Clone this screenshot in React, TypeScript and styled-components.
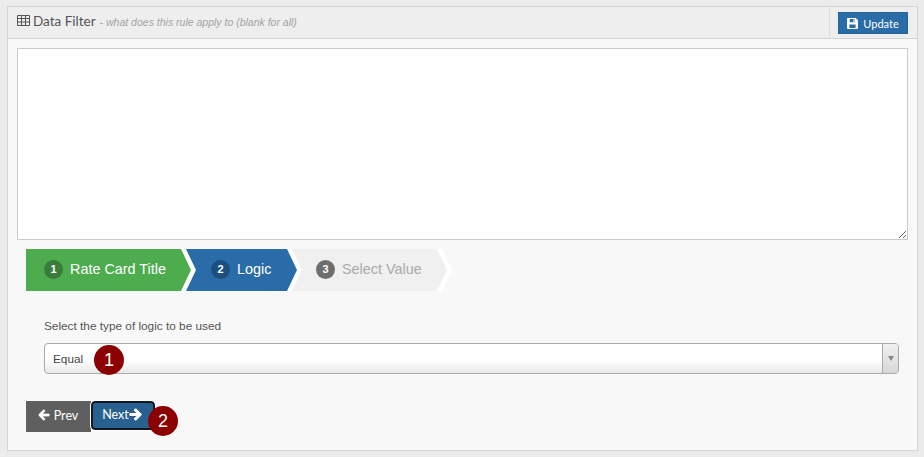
import styled, {createGlobalStyle} from "styled-components";
import {FaArrowLeft, FaArrowRight} from "react-icons/fa";

const GlobalStyle = createGlobalStyle`
  html, body {
    margin: 0;
    background-color: #ebebeb;
  }
  body {
    font-family: "Liberation Sans", Arial, sans-serif;
  }
`

const Page = styled.div`
  width: 924px;
  height: 457px;
  box-sizing: border-box;
  padding: 6px 6px 6px 7px;
  overflow: hidden;
`

const Panel = styled.div`
  height: 445px;
  box-sizing: border-box;
  border: 1px solid #d4d4d4;
  background-color: #f8f8f8;
  display: flex;
  flex-direction: column;
`

const Header = styled.div`
  height: 32px;
  flex: none;
  box-sizing: border-box;
  display: flex;
  align-items: stretch;
  background-color: #eeeeee;
  border-bottom: 1px solid #d4d4d4;
`

const HeaderTitle = styled.div`
  flex: 1;
  display: flex;
  align-items: center;
  padding: 0 0 4px 9px;
  color: #555555;
`

const TitleText = styled.span`
  font-family: Lato, sans-serif;
  font-size: 13.5px;
  margin-left: 3px;
`

const Hint = styled.em`
  font-size: 10.5px;
  color: #a3a3a3;
  margin-left: 4px;
  position: relative;
  top: 1px;
`

const HeaderAction = styled.div`
  width: 88px;
  box-sizing: border-box;
  border-left: 1px solid #dcdcdc;
  padding: 5px 0 0 8px;
`

const UpdateButton = styled.button`
  width: 70px;
  height: 22px;
  padding: 0;
  border: 1px solid #25639b;
  background-color: #2a6ca8;
  color: #ffffff;
  font-family: Lato, sans-serif;
  font-size: 11px;
  display: flex;
  align-items: center;
  justify-content: center;
  gap: 5px;
`

const Body = styled.div`
  flex: 1;
  padding: 9px 9px 0;
  position: relative;
`

const FilterInput = styled.textarea`
  display: block;
  width: 891px;
  height: 192px;
  box-sizing: border-box;
  margin: 0;
  border: 1px solid #cccccc;
  background-color: #ffffff;
  outline: none;
`

const Stepper = styled.div`
  display: flex;
  margin: 9px 0 0 9px;
`

const chevron = "polygon(0 0, calc(100% - 10px) 0, 100% 50%, calc(100% - 10px) 100%, 0 100%, 10px 50%)"
const chevronFlat = "polygon(0 0, calc(100% - 10px) 0, 100% 50%, calc(100% - 10px) 100%, 0 100%)"

const Step = styled.div<{$width: number; $first?: boolean}>`
  width: ${p => p.$width}px;
  height: 42px;
  position: relative;
  margin-left: ${p => (p.$first ? 0 : -5)}px;

  &::before {
    content: "";
    position: absolute;
    inset: 0 -5px 0 5px;
    background-color: #ffffff;
    clip-path: ${chevron};
  }
`

const StepBody = styled.div<{$bg: string; $color: string; $pad: number; $first?: boolean}>`
  position: relative;
  height: 100%;
  box-sizing: border-box;
  display: flex;
  align-items: center;
  gap: 7px;
  padding: 0 0 2px ${p => p.$pad}px;
  background-color: ${p => p.$bg};
  color: ${p => p.$color};
  font-size: 14.4px;
  clip-path: ${p => (p.$first ? chevronFlat : chevron)};
`

const StepNumber = styled.span<{$bg: string}>`
  width: 19px;
  height: 19px;
  border-radius: 50%;
  background-color: ${p => p.$bg};
  color: #ffffff;
  font-size: 11px;
  font-weight: bold;
  display: flex;
  align-items: center;
  justify-content: center;
`

const Field = styled.div`
  margin: 28px 0 0 27px;
  width: 855px;
`

const FieldLabel = styled.div`
  font-size: 11.8px;
  line-height: 14px;
  color: #555555;
  margin-bottom: 10px;
`

const SelectBox = styled.div`
  height: 31px;
  box-sizing: border-box;
  border: 1px solid #aaaaaa;
  border-radius: 4px;
  background: linear-gradient(#ffffff 55%, #e8e8e8);
  display: flex;
  align-items: center;
  justify-content: space-between;
  font-size: 11.8px;
  color: #444444;
  padding-left: 8px;
`

const SelectArrow = styled.div`
  width: 15px;
  height: 100%;
  border-left: 1px solid #aaaaaa;
  display: flex;
  align-items: center;
  justify-content: center;
  background: linear-gradient(#f0f0f0, #d8d8d8);
  border-radius: 0 3px 3px 0;

  &::after {
    content: "";
    border-style: solid;
    border-width: 5px 3px 0;
    border-color: #888888 transparent transparent;
  }
`

const Nav = styled.div`
  display: flex;
  align-items: center;
  margin: 27px 0 0 9px;
`

const PrevButton = styled.button`
  width: 65px;
  height: 31px;
  padding: 0 1px 3px 0;
  border: none;
  background-color: #5f5f5f;
  color: #ffffff;
  font-family: Lato, sans-serif;
  font-size: 12.5px;
  display: flex;
  align-items: center;
  justify-content: center;
  gap: 4px;

  svg {
    stroke: currentColor;
    stroke-width: 40px;
  }
`

const NextButton = styled.button`
  width: 64px;
  height: 29px;
  box-sizing: border-box;
  padding: 0 2px 2px 0;
  border: 2px solid #101820;
  border-radius: 4px;
  outline: 1px solid #ffffff;
  background-color: #286090;
  color: #ffffff;
  font-family: Lato, sans-serif;
  font-size: 12.5px;
  display: flex;
  align-items: center;
  justify-content: center;
  position: relative;
  top: -1px;

  svg {
    stroke: currentColor;
    stroke-width: 40px;
  }
`

const Badge = styled.span<{$left: number; $top: number}>`
  position: absolute;
  left: ${p => p.$left}px;
  top: ${p => p.$top}px;
  width: 30px;
  height: 30px;
  border-radius: 50%;
  background-color: #8b0000;
  color: #ffffff;
  font-size: 18px;
  display: flex;
  align-items: center;
  justify-content: center;
`

const TableIcon = () => (
    <svg width="13" height="11" viewBox="0 0 13 11" fill="none" stroke="#555555" strokeWidth="1">
        <path d="M.5 .5h12v10h-12zM.5 3.5h12M.5 7h12M4.5 .5v10M8.5 .5v10"/>
    </svg>
)

const SaveIcon = () => (
    <svg width="11" height="11" viewBox="0 0 12 12" fill="#ffffff">
        <path fillRule="evenodd" d="M1 0h8.5L12 2.5V11a1 1 0 0 1-1 1H1a1 1 0 0 1-1-1V1a1 1 0 0 1 1-1zm2 1.2v3.3h5.5V1.2zm3.8.5h1.2v2.3H6.8zM2.6 7v3.8h6.8V7z"/>
    </svg>
)

const App = () => {
    return (
        <>
            <GlobalStyle/>
            <Page>
                <Panel>
                    <Header>
                        <HeaderTitle>
                            <TableIcon/>
                            <TitleText>Data Filter</TitleText>
                            <Hint>- what does this rule apply to (blank for all)</Hint>
                        </HeaderTitle>
                        <HeaderAction>
                            <UpdateButton><SaveIcon/>Update</UpdateButton>
                        </HeaderAction>
                    </Header>
                    <Body>
                        <FilterInput/>
                        <Stepper>
                            <Step $width={165} $first>
                                <StepBody $bg="#4cac4e" $color="#ffffff" $pad={18} $first>
                                    <StepNumber $bg="#3a7d3b">1</StepNumber>Rate Card Title
                                </StepBody>
                            </Step>
                            <Step $width={111}>
                                <StepBody $bg="#2a6ca8" $color="#ffffff" $pad={25}>
                                    <StepNumber $bg="#1d4f7e">2</StepNumber>Logic
                                </StepBody>
                            </Step>
                            <Step $width={155}>
                                <StepBody $bg="#f0f0f0" $color="#aaaaaa" $pad={24}>
                                    <StepNumber $bg="#6e6e6e">3</StepNumber>Select Value
                                </StepBody>
                            </Step>
                        </Stepper>
                        <Field>
                            <FieldLabel>Select the type of logic to be used</FieldLabel>
                            <SelectBox>
                                Equal
                                <SelectArrow/>
                            </SelectBox>
                        </Field>
                        <Nav>
                            <PrevButton><FaArrowLeft size={12}/>Prev</PrevButton>
                            <NextButton>Next<FaArrowRight size={13}/></NextButton>
                        </Nav>
                        <Badge $left={86} $top={306}>1</Badge>
                        <Badge $left={140} $top={367}>2</Badge>
                    </Body>
                </Panel>
            </Page>
        </>
    )
}

export default App
